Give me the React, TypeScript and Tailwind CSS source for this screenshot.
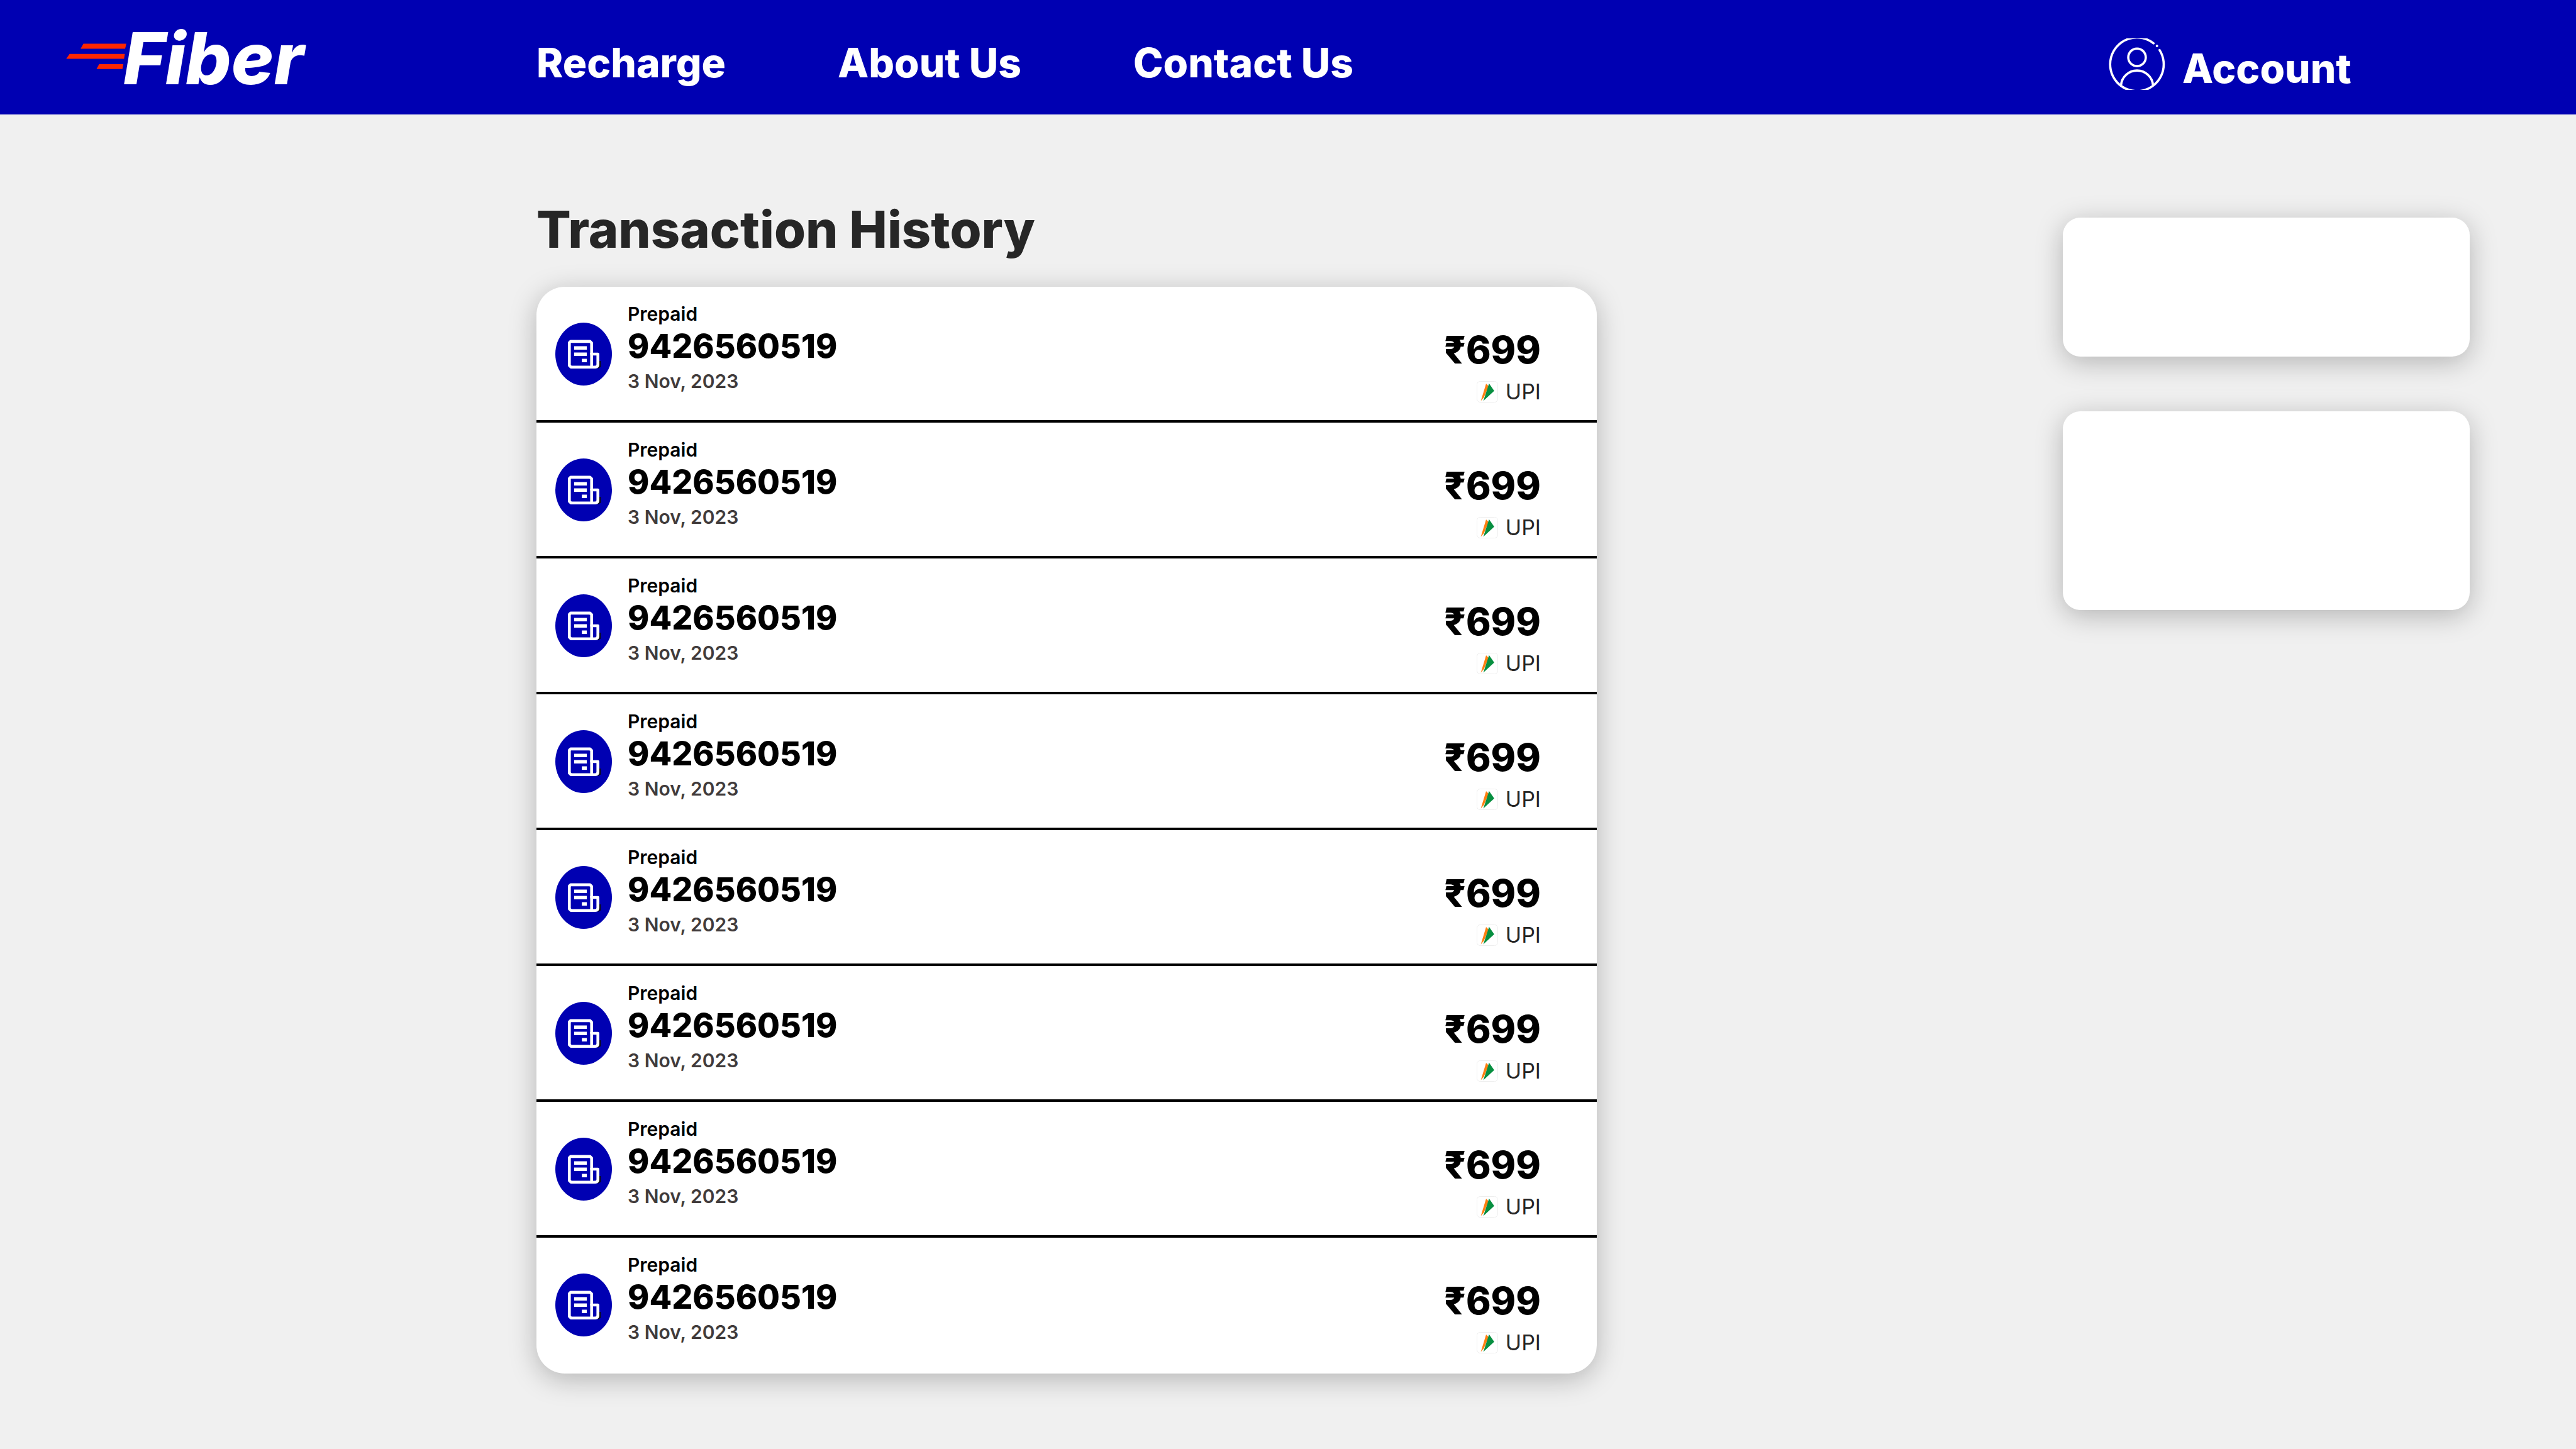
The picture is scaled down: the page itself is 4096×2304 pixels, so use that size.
const pageColumns =
  "grid grid-cols-[853fr_1686fr_741fr_647fr_169fr]";

const transactions = Array.from({ length: 8 }, (_, id) => ({
  id,
  plan: "Prepaid",
  number: "9426560519",
  date: "3 Nov, 2023",
  amount: "₹699",
  method: "UPI",
}));

function FiberLogo() {
  return (
    <svg
      viewBox="0 0 300 182"
      className="h-[182px] w-[300px] overflow-visible"
      role="img"
      aria-label="Fiber"
    >
      <g fill="#ff2600">
        <path d="M27.6 69.6H95.8L94 77.6H23.2Z" />
        <path d="M5.6 85.8H93.4L92.3 93.5H0.3Z" />
        <path d="M52.6 101.9H91.1L89.7 109.8H48.5Z" />
      </g>
      <text
        x="91"
        y="134"
        fill="#ffffff"
        className="font-['Inter',sans-serif] text-[114px] font-extrabold italic"
      >
        Fiber
      </text>
    </svg>
  );
}

function AccountIcon() {
  return (
    <svg
      viewBox="0 0 90 82"
      className="h-[82px] w-[90px]"
      fill="none"
      stroke="#ffffff"
      strokeWidth="3.6"
      aria-hidden="true"
    >
      <path
        d="M71.3 7.9A42.6 42.6 0 1 0 80.9 18.6"
        strokeLinecap="round"
      />
      <circle cx="76.7" cy="12" r="2" fill="#ffffff" stroke="none" />
      <circle cx="45" cy="30.2" r="13.9" />
      <path d="M19.5 74.5A25.6 25.6 0 0 1 70.5 74.5" />
    </svg>
  );
}

function BillIcon() {
  return (
    <svg
      viewBox="0 0 90 100"
      className="h-[100px] w-[90px] shrink-0"
      aria-hidden="true"
    >
      <ellipse cx="45" cy="50" rx="45" ry="50" fill="#0000b2" />
      <path d="M70 61H72.3V70.5L68 73L66 70Z" fill="#0b0b12" />
      <path
        d="M24.3 29.9H55.2L57.7 32.4V50H67.7V66.5Q67.7 70.7 63.5 70.7H24.8L22.3 68.2V31.9Z"
        fill="none"
        stroke="#ffffff"
        strokeWidth="4.6"
        strokeLinejoin="round"
      />
      <path d="M57.7 48V70.7" stroke="#ffffff" strokeWidth="4.6" />
      <path
        d="M30 37.6H50V43H30ZM30 47.6H50V53H30ZM42.2 57.6H50V63H42.2Z"
        fill="#ffffff"
      />
    </svg>
  );
}

function UpiIcon() {
  return (
    <svg viewBox="0 0 34 34" className="size-[34px]" aria-hidden="true">
      <rect
        x="0.5"
        y="0.5"
        width="33"
        height="33"
        rx="5"
        fill="#ffffff"
        stroke="#eeeeee"
      />
      <path d="M15 4L19 8L11.5 26L6.6 31.5Z" fill="#ff7f11" />
      <path d="M19.7 3.8L27.9 15.6L10.6 31.5Z" fill="#078f40" />
    </svg>
  );
}

export default function App() {
  return (
    <div className="min-h-screen bg-[#f0f0f0] font-['Inter',sans-serif] text-black">
      <header
        className={`${pageColumns} bg-[#0000b2] text-[64px] leading-[80px] font-extrabold text-white`}
      >
        <a href="#home" className="pl-[12.3%]">
          <FiberLogo />
        </a>
        <nav className="flex gap-[178px] pt-[60px] whitespace-nowrap">
          <a href="#recharge">Recharge</a>
          <a href="#about">About Us</a>
          <a href="#contact">Contact Us</a>
        </nav>
        <div />
        <button
          type="button"
          className="ml-[73px] flex items-start gap-[27px] self-start pt-[61px] text-left"
        >
          <AccountIcon />
          <span className="pt-2">Account</span>
        </button>
      </header>

      <main className={`${pageColumns} items-start`}>
        <section className="col-start-2 pt-[133px]">
          <h1 className="text-[81px] leading-[100px] font-extrabold text-[#262626]">
            Transaction History
          </h1>
          <ul className="mt-[41px] overflow-hidden rounded-[45px] bg-white shadow-[0_9px_43px_rgba(0,0,0,0.25)]">
            {transactions.map((t) => (
              <li
                key={t.id}
                className="flex items-start border-t-4 border-black pr-[89px] pb-[24px] pl-[30px] first:border-t-0 last:pb-[28px]"
              >
                <div className="pt-[57px]">
                  <BillIcon />
                </div>
                <div className="ml-[25px] flex-1 pt-[25px]">
                  <p className="text-[30px] leading-[36px] font-semibold">
                    {t.plan}
                  </p>
                  <p className="text-[52px] leading-[68px] font-extrabold">
                    {t.number}
                  </p>
                  <p className="mt-[3px] text-[30px] leading-[36px] font-semibold text-[#413b3b]">
                    {t.date}
                  </p>
                </div>
                <div className="flex flex-col items-end pt-[64px]">
                  <p className="text-[60px] leading-[72px] font-extrabold">
                    {t.amount}
                  </p>
                  <p className="mt-[10px] flex items-center gap-[12px] text-[34px] leading-[42px] text-[#262626]">
                    <UpiIcon />
                    {t.method}
                  </p>
                </div>
              </li>
            ))}
          </ul>
        </section>
        <aside className="col-start-4 flex flex-col gap-[87px] pt-[164px]">
          <div className="h-[221px] rounded-[28px] bg-white shadow-[0_9px_43px_rgba(0,0,0,0.25)]" />
          <div className="h-[316px] rounded-[28px] bg-white shadow-[0_9px_43px_rgba(0,0,0,0.25)]" />
        </aside>
      </main>
    </div>
  );
}
